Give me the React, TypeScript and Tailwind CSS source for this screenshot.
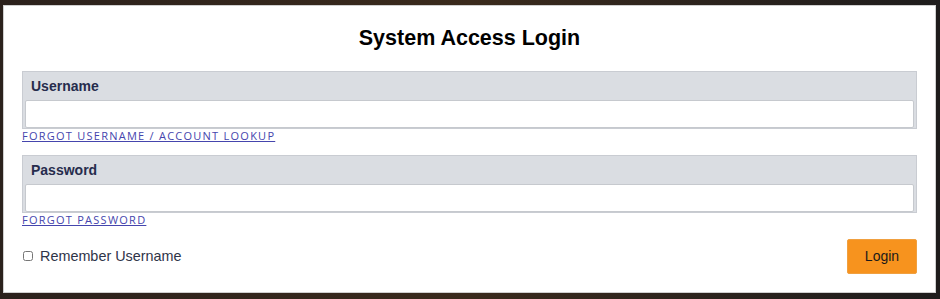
import React from "react";

function Field({ label, link, type }: { label: string; link: string; type: string }) {
  return (
    <div>
      <div className="border border-[#c9ccd2] bg-[#dadde2] px-[2px]">
        <div className="h-[28px] pl-[6px] flex items-center text-[14px] font-bold text-[#262c4d]">
          {label}
        </div>
        <input
          type={type}
          className="block w-full h-[28px] bg-white border border-[#c6c9ce] rounded-[2px] outline-none px-2 text-[14px]"
        />
      </div>
      <a
        href="#"
        className="block text-[11px] leading-[13px] tracking-[1.25px] text-[#4545ad] underline font-['Open_Sans',sans-serif]"
      >
        {link}
      </a>
    </div>
  );
}

export default function App() {
  return (
    <div className="w-[940px] h-[299px] bg-gradient-to-r from-[#2b211c] via-[#3a2a1c] to-[#1e1c1c] pt-[5px] pl-[3px] pr-[4px] pb-[6px] font-['Liberation_Sans',Arial,sans-serif]">
      <div className="h-full bg-white border border-[#cfcfcf] pt-[20px] px-[18px]">
        <h1 className="text-center text-[21.5px] leading-[25px] font-bold text-black">
          System Access Login
        </h1>
        <div className="mt-[20px] flex flex-col gap-[13px]">
          <Field label="Username" link="FORGOT USERNAME / ACCOUNT LOOKUP" type="text" />
          <Field label="Password" link="FORGOT PASSWORD" type="password" />
        </div>
        <div className="mt-[13px] flex items-center justify-between">
          <label className="flex items-center gap-[7px] text-[14.4px] text-[#2f3448] ml-[1px]">
            <input type="checkbox" className="w-[10px] h-[10px]" />
            Remember Username
          </label>
          <button className="w-[70px] h-[35px] bg-[#f7931e] border border-[#f0a040] rounded-[2px] text-[14px] text-[#1a1a1a]">
            Login
          </button>
        </div>
      </div>
    </div>
  );
}
